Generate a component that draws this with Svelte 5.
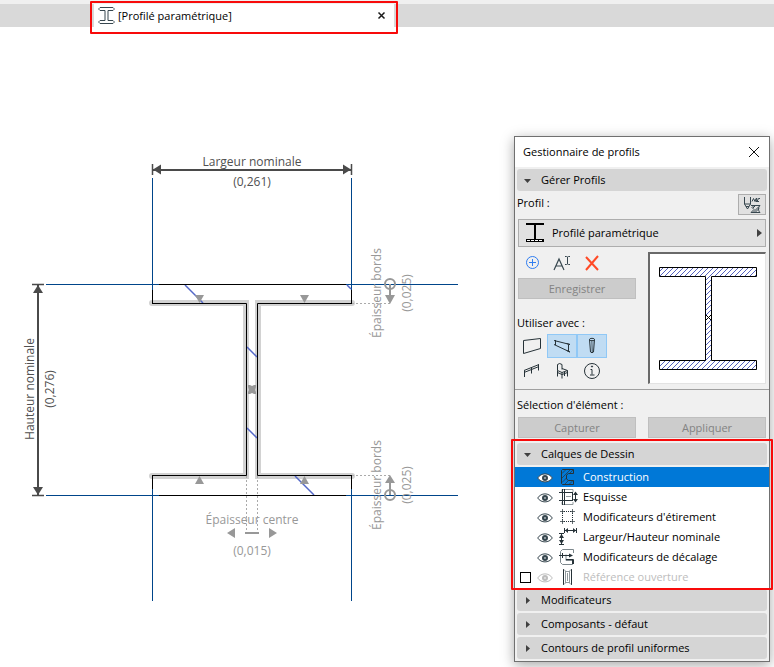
<script>
    let toolbar = ['wall', 'beam', 'column', 'railing', 'object', 'info'];
    let toolLabels = {
        wall: 'Mur',
        beam: 'Poutre',
        column: 'Poteau',
        railing: 'Garde-corps',
        object: 'Objet',
        info: 'Information'
    };
    let active = $state({beam: true, column: true});
    let selected = $state('construction');
    let layers = [
        {id: 'construction', label: 'Construction'},
        {id: 'sketch', label: 'Esquisse'},
        {id: 'stretch', label: "Modificateurs d'étirement"},
        {id: 'nominal', label: 'Largeur/Hauteur nominale'},
        {id: 'offset', label: 'Modificateurs de décalage'},
        {id: 'opening', label: 'Référence ouverture', hidden: true}
    ];
    let sections = ['Modificateurs', 'Composants - défaut', 'Contours de profil uniformes'];

    function toggle(tool) {
        active[tool] = !active[tool];
    }
</script>

{#snippet header(title, open)}
    <button class="section-head" type="button" aria-expanded={open}>
        <svg class="arrow" width="9" height="9" viewBox="0 0 9 9">
            {#if open}
                <path d="M1 3h7L4.500 7z" fill="#404040"/>
            {:else}
                <path d="M3 1v7l4-3.500z" fill="#404040"/>
            {/if}
        </svg>
        <span>{title}</span>
    </button>
{/snippet}

<div class="app">
    <nav class="tabs">
        <div class="tab marked">
            <svg width="17" height="17" viewBox="0 0 17 17" fill="none" stroke="#37474f">
                <path d="M2 .5h13l1 1v1l-1 1h-5v10h5l1 1v1l-1 1H2l-1-1v-1l1-1h5v-10H2l-1-1v-1z"/>
            </svg>
            <a href="#profil">[Profilé paramétrique]</a>
            <button type="button" aria-label="Fermer l'onglet">
                <svg width="7" height="7" viewBox="0 0 7 7" stroke="#1a1a1a" stroke-width="1.500">
                    <path d="M.5.5l6 6M6.500.5l-6 6"/>
                </svg>
            </button>
        </div>
    </nav>

    <main>
        <svg class="drawing" aria-label="Profil">
            <!-- halo of the offset edges -->
            <g class="halo">
                <path d="M152 276h94v173h-94"/>
                <path d="M352 276h-94v173h94"/>
            </g>
            <g class="ref">
                <path d="M352 276.500h38M352 448.500h38M352 257.500h38M352 468.500h38M246.500 449v56M257.500 449v56"/>
            </g>
            <g class="guide">
                <path d="M152.500 151v112M351.500 151v112M152.500 462v112M351.500 462v112"/>
                <path d="M46 257.500h113M345 257.500h113M46 468.500h113M345 468.500h113"/>
            </g>
            <g class="hatch">
                <path d="M185 258l18 18M347 258l4 4M247 320l10 10M247 401l10 10M295 449l19 19"/>
            </g>
            <g class="edge">
                <path d="M159 257.500h187M159 468.500h187M152.500 263v14M351.500 263v14M152.500 448v14M351.500 448v14"/>
                <path d="M152 276.500h94.500v172H152M352 276.500h-94.500v172H352"/>
            </g>
            <g class="handle">
                <path d="M195 268h9l-4.500 8zM300 268h9l-4.500 8zM195 457h9l-4.500-8zM300 457h9l-4.500-8z"/>
                <path d="M248 358h2l2 1 2-1h2v2l-1 3 1 2v2h-2l-2-1-2 1h-2v-2l1-2-1-3z"/>
                <path d="M235 501v10l-8-5zM269 501v10l8-5zM245 505h14v2h-14z"/>
                <path d="M385 268h10l-5 9zM385 456h10l-5-8z"/>
            </g>
            <g class="pin">
                <circle cx="390" cy="257" r="5"/>
                <circle cx="390" cy="468" r="5"/>
                <path d="M390 257v12M390 468v-12"/>
            </g>
            <g class="dim">
                <path d="M152.500 143h199M38 257.500v211" stroke-width="2"/>
                <path d="M152.500 137v11M351.500 137v11M32 257.500h12M32 468.500h12" stroke-width="1.500"/>
                <path class="solid" d="M153 142.500l8-5v10zM351 142.500l-8-5v10zM38 258l-5 8h10zM38 468l-5-8h10z"/>
            </g>
            <g class="dim-text">
                <text x="252" y="139">Largeur nominale</text>
                <text x="252" y="159">(0,261)</text>
                <text transform="translate(34 362) rotate(-90)">Hauteur nominale</text>
                <text transform="translate(54 362) rotate(-90)">(0,276)</text>
            </g>
            <g class="dim-text light">
                <text x="252" y="497">Épaisseur centre</text>
                <text x="252" y="528">(0,015)</text>
                <text transform="translate(381 266) rotate(-90)">Épaisseur bords</text>
                <text transform="translate(411 266) rotate(-90)">(0,025)</text>
                <text transform="translate(381 458) rotate(-90)">Épaisseur bords</text>
                <text transform="translate(411 458) rotate(-90)">(0,025)</text>
            </g>
        </svg>

        <aside class="palette">
            <header>
                <h1>Gestionnaire de profils</h1>
                <button type="button" aria-label="Fermer">
                    <svg width="12" height="12" viewBox="0 0 12 12" stroke="#111">
                        <path d="M1 1l10 10M11 1L1 11"/>
                    </svg>
                </button>
            </header>

            {@render header('Gérer Profils', true)}

            <section class="manage">
                <div class="row">
                    <span>Profil :</span>
                    <button class="button filter" type="button" aria-label="Filtrer">
                        <svg width="18" height="18" viewBox="0 0 18 18" fill="none" stroke="#37474f">
                            <path d="M1.500 1v7h6V1M1.500 8l3 5 3-5M3 10.500h3"/>
                            <path d="M9 5.500l1.500-3 1.500 3 1-3h1l-1 3h3M14 5.500l1.500-3h1.500"/>
                            <path d="M8 9.500h9M17 9.500c-2 2-2 5 0 7H8l3-3-2-2 2-2M10 16.500l6-6M12 16.500l4-4M10 12l3-3"/>
                        </svg>
                    </button>
                </div>

                <button class="button chooser" type="button">
                    <svg width="18" height="20" viewBox="0 0 18 20">
                        <path d="M0 0h18v2H10v14h8v3H0v-3h8V2H0z" fill="#000"/>
                        <path d="M1 17.500h16" stroke="#fff" stroke-dasharray="3 1"/>
                    </svg>
                    <span>Profilé paramétrique</span>
                    <svg width="5" height="8" viewBox="0 0 5 8"><path d="M0 0v8l5-4z" fill="#404040"/></svg>
                </button>

                <div class="columns">
                    <div class="left">
                        <div class="actions">
                            <button type="button" aria-label="Nouveau">
                                <svg width="14" height="14" viewBox="0 0 14 14" fill="none" stroke="#2f7df0">
                                    <circle cx="7.500" cy="6.500" r="6"/>
                                    <path d="M7.500 3v7M4 6.500h7"/>
                                </svg>
                            </button>
                            <button type="button" aria-label="Renommer">
                                <svg width="18" height="16" viewBox="0 0 18 16" fill="none" stroke="#37474f">
                                    <path d="M1 15L6 4l5 11M3 11h6" stroke-width="1.200"/>
                                    <path d="M12 1.500h1.500l1 .5 1-.5H17M14.500 2v7M12 9.500h1.500l1-.5 1 .5H17"/>
                                </svg>
                            </button>
                            <button type="button" aria-label="Supprimer">
                                <svg width="14" height="16" viewBox="0 0 14 16" stroke="#ff4a26" stroke-width="2">
                                    <path d="M1 2l12 13M13 1L1 15"/>
                                </svg>
                            </button>
                        </div>
                        <button class="button" type="button" disabled>Enregistrer</button>
                        <div class="use-with">Utiliser avec :</div>
                        <div class="tools">
                            {#each toolbar as tool}
                                <button type="button" aria-label={toolLabels[tool]} aria-pressed={!!active[tool]}
                                        class:active={active[tool]} onclick={() => toggle(tool)}>
                                    <svg width="20" height="20" viewBox="0 0 20 20" fill="none" stroke="#263238">
                                        {#if tool === 'wall'}
                                            <path d="M1.500 4.500l17-2v10l-17 5z"/>
                                        {:else if tool === 'beam'}
                                            <path d="M3.500 4v5M2 4.500l16 4M2 8.500l16 7.500M16.500 8.500v6.500M14.500 7.500l3.500 1M14.500 14.500l3.500 1.500"/>
                                        {:else if tool === 'column'}
                                            <path d="M7.500 3.500l1 12.500q1.500 1.500 3 0l1-12.500"/>
                                            <ellipse cx="10" cy="3.500" rx="2.500" ry="1.200"/>
                                            <path d="M9.500 5l.5 11M11 5l-.5 11" stroke-width=".5"/>
                                        {:else if tool === 'railing'}
                                            <path d="M2 9.500l15-6M2 11.500l15-6M2.500 9.500v6.500M9.500 6.500v6M16.500 3.500v6"/>
                                        {:else if tool === 'object'}
                                            <path d="M5.500 3.500q2-2 4.500 0v5M5.500 3.500v6l4.500 2 5.500-2-5.500-2M5.500 9.500v6M10 11.500v6M15.500 9.500v6M12.500 11v4M5.500 11.500l4.500 2 5.500-2"/>
                                        {:else}
                                            <circle cx="10" cy="10" r="7.500"/>
                                            <path d="M8.500 8.500H10v5M8 14h4.500"/>
                                            <circle cx="10" cy="5.500" r=".6" fill="#263238"/>
                                        {/if}
                                    </svg>
                                </button>
                            {/each}
                        </div>
                    </div>
                    <div class="preview">
                        <svg width="98" height="104" viewBox="0 0 98 104">
                            <defs>
                                <pattern id="hatch" width="5" height="5" patternUnits="userSpaceOnUse">
                                    <path d="M-1 6L6-1M-1 1l2-2M4 6l2-2" stroke="#2838b0" stroke-width=".8"/>
                                </pattern>
                            </defs>
                            <path d="M.5.5h97v9h-45v84h45v9H.5v-9h46v-84H.5z" fill="url(#hatch)" stroke="#000"/>
                            <path d="M47 48l5 5M52 48l-5 5" stroke="#000"/>
                        </svg>
                    </div>
                </div>
            </section>

            <section class="selection">
                <div class="selection-title">Sélection d'élément :</div>
                <div class="pair">
                    <button class="button" type="button" disabled>Capturer</button>
                    <button class="button" type="button" disabled>Appliquer</button>
                </div>
            </section>

            <section class="layers marked">
                {@render header('Calques de Dessin', true)}
                <ul>
                    {#each layers as layer}
                        <li class:selected={selected === layer.id} class:off={layer.hidden}>
                            <span class="check">
                                {#if layer.hidden}
                                    <input type="checkbox" id="check-{layer.id}" aria-label={layer.label}>
                                {/if}
                            </span>
                            <button class="name" type="button" onclick={() => selected = layer.id}>
                                <svg class="eye" width="16" height="14" viewBox="0 0 16 14">
                                    <path d="M.7 8C4 2.500 12 2.500 15.300 8 12 13.200 4 13.200 .7 8z" fill="#fff" stroke="currentColor"/>
                                    <circle cx="8" cy="8" r="3" fill="currentColor"/>
                                    <circle cx="8" cy="8" r=".8" fill="#fff"/>
                                </svg>
                                <svg width="18" height="18" viewBox="0 0 18 18" fill="none" stroke="#263238">
                                    {#if layer.id === 'construction'}
                                        <path d="M3.500 1.500h11v4H9.500l-2 1.500v4l2 1.500h5v4h-11l-1-1v-13z"/>
                                        <path d="M3 5.500l4-4M3 10l8.500-8.500M3 14.500l4.500-4.500M5.500 16.500l4-4M10 16.500l4-4M11 5l3-3" stroke-width=".7"/>
                                    {:else if layer.id === 'sketch'}
                                        <path d="M3 4V1.500h11V4M3 14v2.500h11V14" stroke="#90999d"/>
                                        <path d="M3.500 1v16M5.500 1v16M0 4.500h13M0 12.500h13M13.500 4v9M16.500 5v8"/>
                                        <path d="M16.500 3.500L19 7h-5zM16.500 14.500L14 11h5z" fill="#263238" stroke="none"/>
                                        <path d="M7 9l1-1 1 1 1-1 1 1 1-1" stroke="#90999d"/>
                                    {:else if layer.id === 'stretch'}
                                        <path d="M5 3.500h8M5 13.500h8M3.500 5v8M13.500 5v8" stroke-dasharray="1 1"/>
                                        <path d="M1 3.500h5M3.500 1v5M11 3.500h5M13.500 1v5M1 13.500h5M3.500 11v5M11 13.500h5M13.500 11v5" stroke-width=".7"/>
                                    {:else if layer.id === 'nominal'}
                                        <path d="M0 5.500h5M2.500 6v11M0 16.500h5"/>
                                        <path d="M0 10l2.500-4L5 10zM0 12l2.500 4L5 12z" fill="#263238" stroke="none"/>
                                        <path d="M5.500 0v5M17.500 0v5M6 2.500h11"/>
                                        <path d="M9 0v5L6 2.500zM14 0v5l3-2.500z" fill="#263238" stroke="none"/>
                                    {:else if layer.id === 'offset'}
                                        <path d="M14.500 5V1.500h-11l-2 2v11l2 2h10v-4H7v-6" stroke="#7c878c"/>
                                        <path d="M0 7.500h13M3.500 5v5M7 11.500h7.500v4"/>
                                        <path d="M10 5.500l4 2-4 2zM13 12h2v4h-2z" fill="#263238" stroke="none"/>
                                    {:else}
                                        <path d="M4.500 1v16M12.500 1v16"/>
                                        <path d="M6.500 3v12M10.500 3v12M8.500 5v8M5 1.500l2 2h3l2-2M5 16.500l2-2h3l2 2" stroke="#90999d"/>
                                    {/if}
                                </svg>
                                <span>{layer.label}</span>
                            </button>
                        </li>
                    {/each}
                </ul>
            </section>

            <div class="closed">
                {#each sections as title}
                    {@render header(title, false)}
                {/each}
            </div>
        </aside>
    </main>
</div>

<style>
    :global(body) {
        margin: 0;
        background: #fff;
    }

    .app {
        min-height: 100vh;
        font-family: "Open Sans", "Noto Sans", sans-serif;
        font-size: 11px;
        line-height: 16px;
        color: #000;
    }

    button {
        font: inherit;
        color: inherit;
        border: 0;
        padding: 0;
        margin: 0;
        background: none;
    }

    svg {
        display: block;
        flex: none;
        overflow: visible;
    }

    /* Red callout frames */
    .marked {
        position: relative;
    }

    .marked::after {
        content: "";
        position: absolute;
        z-index: 2;
        border: 2px solid #f80a0a;
        border-radius: 1px;
        pointer-events: none;
    }

    .tabs {
        display: flex;
        height: 23px;
        padding-left: 94px;
        border-top: 4px solid #f0f0f0;
        background: #d9d9d9;
    }

    .tab {
        display: flex;
        align-items: center;
        width: 300px;
        padding: 0 8px 0 4px;
        box-sizing: border-box;
        background: #fff;
    }

    .tab::after {
        inset: -3px -4px -7px;
    }

    .tab a {
        flex: 1;
        margin-left: 3px;
        color: #000;
        text-decoration: none;
    }

    .tab button {
        padding: 1px;
    }

    main {
        display: flex;
        align-items: flex-start;
        padding-right: 4px;
    }

    .drawing {
        flex: 1;
        min-width: 0;
        height: 600px;
    }

    .drawing g {
        fill: none;
    }

    .halo {
        stroke: #d2d2d2;
        stroke-width: 6;
        stroke-linecap: round;
    }

    .ref {
        stroke: #aaa;
        stroke-dasharray: 2 2;
    }

    .guide {
        stroke: #00458a;
    }

    .hatch {
        stroke: #5468c8;
        stroke-width: 1.5;
    }

    .edge {
        stroke: #000;
    }

    .drawing .handle {
        fill: #989898;
    }

    .pin {
        stroke: #989898;
        stroke-width: 2;
    }

    .dim {
        stroke: #4a4a4a;
    }

    .solid {
        fill: #4a4a4a;
        stroke: none;
    }

    .drawing .dim-text {
        fill: #505050;
        font-size: 12px;
        text-anchor: middle;
    }

    .drawing .light {
        fill: #989898;
    }

    .palette {
        flex: none;
        width: 254px;
        margin-top: 109px;
        padding-bottom: 2px;
        border: 1px solid #707070;
        background: #f0f0f0;
        box-shadow: 0 3px 12px rgba(0, 0, 0, .35);
    }

    header {
        display: flex;
        align-items: center;
        justify-content: space-between;
        height: 30px;
        margin-bottom: 2px;
        padding: 0 9px 0 8px;
        background: #fff;
    }

    h1 {
        margin: 0;
        font-size: 11px;
        font-weight: 400;
    }

    .section-head {
        display: flex;
        align-items: center;
        width: calc(100% - 4px);
        height: 22px;
        margin: 0 2px;
        padding-left: 6px;
        border-radius: 3px;
        background: #d5d5d5;
        text-align: left;
    }

    .arrow {
        margin-right: 9px;
    }

    .manage {
        padding: 3px 3px 5px;
        border-bottom: 1px solid #a0a0a0;
    }

    .row {
        display: flex;
        align-items: flex-start;
        justify-content: space-between;
        margin-left: -1px;
        line-height: 18px;
    }

    .button {
        height: 21px;
        border: 1px solid #adadad;
        background: #e1e1e1;
        box-sizing: border-box;
    }

    .button:disabled {
        border-color: #bfbfbf;
        background: #ccc;
        color: #838383;
    }

    .filter {
        display: flex;
        align-items: center;
        justify-content: center;
        width: 28px;
    }

    .chooser {
        display: flex;
        align-items: center;
        width: 100%;
        height: 28px;
        margin-top: 4px;
        padding: 0 3px 0 7px;
        text-align: left;
    }

    .chooser span {
        flex: 1;
        margin-left: 8px;
    }

    .columns {
        display: grid;
        grid-template-columns: 1fr 1fr;
        gap: 12px;
        margin-top: 5px;
    }

    .left > .button {
        width: 100%;
    }

    .actions {
        display: flex;
        align-items: center;
        gap: 14px;
        height: 22px;
        margin-bottom: 4px;
        padding-left: 7px;
    }

    .use-with {
        margin: 16px 0 3px -1px;
    }

    .tools {
        display: grid;
        grid-template-columns: repeat(3, 30px);
        grid-template-rows: 24px 26px;
        margin-left: -1px;
    }

    .tools button {
        display: flex;
        align-items: center;
        justify-content: center;
        box-sizing: border-box;
    }

    .tools .active {
        border: 1px solid #90c8f6;
        background: #c0dcf3;
    }

    .preview {
        display: flex;
        align-items: center;
        justify-content: center;
        height: 132px;
        border: 1px solid #e3e3e3;
        border-top: 2px solid #696969;
        border-left: 2px solid #696969;
        box-sizing: border-box;
        background: #fff;
    }

    .selection {
        padding: 7px 3px 5px;
    }

    .selection-title {
        margin: 0 0 4px -1px;
    }

    .pair {
        display: flex;
        gap: 12px;
    }

    .pair .button {
        flex: 1;
    }

    .layers::after {
        inset: -4px -4px -1px;
    }

    ul {
        margin: 2px 0 0;
        padding: 0 0 2px;
        list-style: none;
        background: #fff;
    }

    li {
        display: flex;
        align-items: center;
        height: 20px;
    }

    .check {
        width: 22px;
        padding-left: 5px;
        box-sizing: border-box;
    }

    input {
        display: block;
        appearance: none;
        width: 11px;
        height: 11px;
        margin: 0;
        border: 1px solid #000;
        background: #fff;
    }

    input:checked {
        background: #0078d7;
    }

    .name {
        display: flex;
        align-items: center;
        flex: 1;
        height: 20px;
        text-align: left;
    }

    .name span {
        margin-left: 6px;
    }

    .eye {
        margin-right: 6px;
        color: #37474f;
    }

    .selected {
        background: #0078d7;
        color: #fff;
    }

    .off,
    .off .eye {
        color: #bdbdbd;
    }

    .closed {
        display: flex;
        flex-direction: column;
        gap: 2px;
    }
</style>
